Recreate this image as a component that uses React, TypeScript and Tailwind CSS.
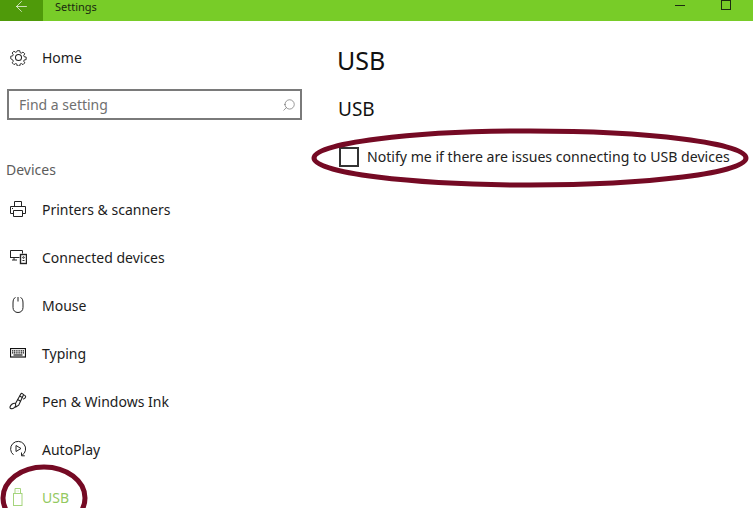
import type { ReactNode } from "react";
import { ArrowLeft, Search } from "lucide-react";

const Gear = () => (
  <svg width="17" height="17" viewBox="0 0 18 18" fill="none" stroke="#222" strokeWidth="1.100">
    <circle cx="9" cy="9" r="3.200" />
    <path d="M7.500 1h3l.4 2.300 1.400.6 2-1.300 2.100 2.100-1.300 2 .6 1.400 2.300.4v3l-2.300.4-.6 1.400 1.300 2-2.100 2.100-2-1.300-1.400.6-.4 2.300h-3l-.4-2.300-1.400-.6-2 1.300-2.100-2.100 1.300-2-.6-1.400L-.1 10.500v-3l2.300-.4.6-1.400-1.300-2 2.100-2.100 2 1.300 1.400-.6z" transform="translate(.9 .9) scale(.9)" />
  </svg>
);

const Printer = () => (
  <svg width="18" height="18" viewBox="0 0 18 18" fill="none" stroke="#222" strokeWidth="1">
    <path d="M5.500 6.500v-5h7v5M4.500 13.500h-3v-7h15v7h-3" />
    <path d="M4.500 10.500h9v6h-9zM3 8.500h1" />
  </svg>
);

const Connected = () => (
  <svg width="18" height="16" viewBox="0 0 18 16" fill="none" stroke="#222" strokeWidth="1">
    <path d="M10.500 8.500h-9v-7h12v3M1 8.500h9M5 8.500v2.500M3 11h5" />
    <rect x="11.500" y="5.500" width="6" height="9" strokeWidth="1.400" />
    <circle cx="14.500" cy="8.500" r=".8" />
    <path d="M13.500 11.500h2" />
  </svg>
);

const Mouse = () => (
  <svg width="14" height="18" viewBox="0 0 14 18" fill="none" stroke="#222" strokeWidth="1">
    <path d="M4.500 1.500C2.800 2 2 4 2 7v4.500c0 3 2 5 5 5s5-2 5-5V7c0-3-.8-5-2.500-5.500" />
    <path d="M7 1v4.500" />
  </svg>
);

const Keyboard = () => (
  <svg width="16" height="10" viewBox="0 0 16 10" fill="none" stroke="#111" strokeWidth="1">
    <rect x=".5" y=".5" width="15" height="8.500" strokeWidth="1.200" />
    <path d="M2 2.800h12M2 4.800h12" strokeDasharray="1.200 .6" strokeWidth="1.200" />
    <path d="M3.500 7h9" strokeWidth="1.200" />
  </svg>
);

const Pen = () => (
  <svg width="18" height="18" viewBox="0 0 18 18" fill="none" stroke="#222" strokeWidth="1.100">
    <path d="M6.500 11.500L11.800 2c.7-1.200 3-.2 2.500 1.200l-4.600 10-2.900 1.800z" />
    <path d="M8.500 7.500l3.200 1.700M10.500 4l3 1.600" />
    <path d="M14 2.500c1.600.5 2.700 1.300 2.700 2.300s-1.300 1.900-2.500 2.400" />
    <path d="M6.500 11.500C4.500 10.500 1.600 12.600 1 15c-.4 1.700 2.300 2.400 4 .8 .7-.6 1.300-1.200 1.800-1.800" />
  </svg>
);

const AutoPlay = () => (
  <svg width="18" height="18" viewBox="0 0 18 18" fill="none" stroke="#222" strokeWidth="1">
    <path d="M4.500 14.800A7.500 7.500 0 1 1 13 15.300" />
    <path d="M12.500 12.500v3.300h3.300" />
    <path d="M7 5.500l5 3-5 3z" />
  </svg>
);

const Usb = () => (
  <svg width="10" height="18" viewBox="0 0 10 18" fill="none" stroke="#a5d47c" strokeWidth="1">
    <rect x=".5" y="5.500" width="8.500" height="12" />
    <path d="M2 5.500V.5h5.500v5M3.800 3h.5M5.300 3h.5" />
  </svg>
);

const Row = ({ icon, label, active }: { icon: ReactNode; label: string; active?: boolean }) => (
  <div className={`flex h-12 shrink-0 items-center ${active ? "text-[#93c95f]" : "text-[#1c1c1c]"}`}>
    <div className="flex w-[42px] shrink-0 justify-center pr-[6px]">{icon}</div>
    <span className="text-[14px]">{label}</span>
  </div>
);

const items = [
  { icon: <Printer />, label: "Printers & scanners" },
  { icon: <Connected />, label: "Connected devices" },
  { icon: <Mouse />, label: "Mouse" },
  { icon: <Keyboard />, label: "Typing" },
  { icon: <Pen />, label: "Pen & Windows Ink" },
  { icon: <AutoPlay />, label: "AutoPlay" },
];

export default function App() {
  return (
    <div className="relative flex h-[508px] w-[753px] flex-col overflow-hidden bg-white font-['Noto_Sans',sans-serif]">
      {/* title bar */}
      <div className="flex h-[21px] shrink-0 items-center bg-[#78cc28]">
        <div className="flex h-full w-[43px] items-center justify-center bg-[#4f9a0a] pb-[9px]">
          <ArrowLeft size={17} strokeWidth={1} className="text-white" />
        </div>
        <span className="ml-3 pb-[6px] text-[11px] text-[#1a2a10]">Settings</span>
        <div className="ml-auto mb-[11px] mr-[22px] flex items-center gap-[36px]">
          <div className="h-px w-[10px] bg-[#1c2c10]" />
          <div className="h-[10px] w-[10px] border border-[#1c2c10]" />
        </div>
      </div>

      <div className="flex min-h-0 flex-1">
        {/* sidebar */}
        <div className="flex w-[338px] shrink-0 flex-col pt-3">
          <Row icon={<Gear />} label="Home" />
          <div className="mx-[7px] mt-[8px] flex h-[31px] w-[295px] shrink-0 items-center justify-between border-2 border-[#7a7a7a] pl-[10px] pr-[4px]">
            <span className="text-[14px] text-[#6f6f6f]">Find a setting</span>
            <Search size={14} strokeWidth={1} className="-scale-x-100 text-[#555]" />
          </div>
          <div className="ml-[6px] mt-[40px] mb-[5px] text-[14px] leading-[20px] text-[#5c5c5c]">Devices</div>
          {items.map((item) => (
            <Row key={item.label} icon={item.icon} label={item.label} />
          ))}
          <Row icon={<Usb />} label="USB" active />
        </div>

        {/* content */}
        <div className="flex min-w-0 flex-1 flex-col text-[#111]">
          <h1 className="mt-[19px] -ml-px text-[25px] leading-[40px]">USB</h1>
          <h2 className="mt-[15px] text-[19px] leading-[28px]">USB</h2>
          <div className="mt-[23px] ml-px flex items-center gap-[8px]">
            <div className="h-5 w-5 shrink-0 border-2 border-[#333]" />
            <span className="whitespace-nowrap text-[14.100px] text-[#222]">
              Notify me if there are issues connecting to USB devices
            </span>
          </div>
        </div>
      </div>

      {/* hand drawn marks over the screenshot */}
      <svg className="pointer-events-none absolute inset-0" width="753" height="508" fill="none" stroke="#750a24" strokeWidth="5">
        <ellipse cx="530" cy="158" rx="216" ry="27" />
        <ellipse cx="44" cy="498" rx="41" ry="31" />
      </svg>
    </div>
  );
}
